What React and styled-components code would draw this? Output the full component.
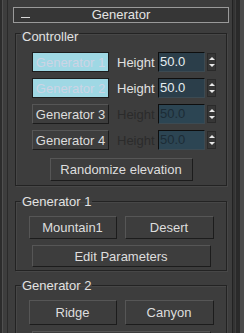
import React from 'react'
import styled, { createGlobalStyle } from 'styled-components'

const Global = createGlobalStyle`
  html, body { margin: 0; padding: 0; background: #3d3d3d; }
  * { box-sizing: border-box; }
`

const Screen = styled.div`
  width: 244px;
  height: 333px;
  overflow: hidden;
  display: flex;
  background: #3d3d3d;
  font-family: "Liberation Sans", Arial, sans-serif;
  font-size: 13px;
  color: #dedede;
  border-left: 2px solid #2c2c2c;
`

const Gutter = styled.div`
  width: 5px;
  border-left: 1px solid #505050;
`

const Panel = styled.div`
  width: 226px;
  flex: none;
  border-left: 1px solid #2a2a2a;
  border-right: 1px solid #222;
  display: flex;
  flex-direction: column;
  padding-top: 7px;
`

const ScrollTrack = styled.div`
  flex: 1;
  border-left: 2px solid #333;
  display: flex;
  justify-content: flex-end;
  & > div {
    width: 8px;
    background: #4a4a4a;
    border-left: 4px solid #2a2a2a;
  }
`

const RolloutHeader = styled.div`
  margin: 0 3px 0 5px;
  height: 16px;
  border: 1px solid #9a9a9a;
  background: #363636;
  display: flex;
  align-items: center;
  justify-content: center;
  position: relative;
  line-height: 14px;
  color: #e4e4e4;
`

const Dash = styled.span`
  position: absolute;
  left: 7px;
  top: 9px;
  width: 9px;
  height: 1px;
  background: #d8d8d8;
`

const Group = styled.fieldset`
  margin: ${p => p.$top || 0}px 5px 0 7px;
  padding: ${p => p.$pt || 7}px 5px ${p => p.$pb || 3}px;
  border: 1px solid #232323;
  box-shadow: inset 1px 1px 0 #474747, 1px 1px 0 #474747;
  min-width: 0;
`

const Legend = styled.legend`
  padding: ${p => p.$shift || 0}px 1px 0;
  line-height: 15px;
  color: #e2e2e2;
`

const Rows = styled.div`
  padding-left: 11px;
  display: flex;
  flex-direction: column;
  gap: 6px;
`

const Row = styled.div`
  display: flex;
  align-items: center;
  height: 20px;
`

const Btn = styled.button`
  font-family: "Liberation Sans", Arial, sans-serif;
  font-size: 13px;
  padding: 0;
  width: ${p => p.$w ? p.$w + 'px' : 'auto'};
  height: ${p => p.$h || 23}px;
  color: ${p => p.$active ? '#cdd4e4' : '#dedede'};
  background: ${p => p.$active ? '#9fd8e4' : '#3d3d3d'};
  border: 1px solid;
  border-color: ${p => p.$active ? '#1c1c1c' : '#565656 #1c1c1c #1c1c1c #565656'};
  white-space: nowrap;
`

const HeightLabel = styled.span`
  margin-left: 8px;
  width: 41px;
  color: ${p => p.$disabled ? '#2b2b2b' : '#e0e0e0'};
`

const Field = styled.div`
  width: 47px;
  height: 20px;
  background: ${p => p.$disabled ? '#2c4553' : '#2b3e4a'};
  border: 1px solid;
  border-color: #0e0e0e #3c4a52 #3c4a52 #0e0e0e;
  padding-left: 1px;
  line-height: 17px;
  color: ${p => p.$disabled ? '#1c2c36' : '#e6eef0'};
`

const Arrows = styled.div`
  margin-left: 2px;
  width: 9px;
  height: 18px;
  background: #363636;
  border: 1px solid #2a2a2a;
  display: flex;
  flex-direction: column;
  align-items: center;
  justify-content: space-evenly;
`

const Tri = styled.span`
  width: 0;
  height: 0;
  border-left: 3px solid transparent;
  border-right: 3px solid transparent;
  ${p => p.$down ? 'border-top: 3px solid #e8e8e8;' : 'border-bottom: 3px solid #e8e8e8;'}
`

const Center = styled.div`
  display: flex;
  justify-content: center;
  margin-top: ${p => p.$top || 0}px;
`

const Pair = styled.div`
  display: grid;
  grid-template-columns: 88px 89px;
  column-gap: 8px;
  justify-content: center;
`

const controllers = [
  { name: 'Generator 1', active: true },
  { name: 'Generator 2', active: true },
  { name: 'Generator 3', disabled: true },
  { name: 'Generator 4', disabled: true },
]

function GenRow({ name, active, disabled }) {
  return (
    <Row>
      <Btn $w={77} $h={20} $active={active}>{name}</Btn>
      <HeightLabel $disabled={disabled}>Height</HeightLabel>
      <Field $disabled={disabled}>50.0</Field>
      <Arrows><Tri /><Tri $down /></Arrows>
    </Row>
  )
}

function GeneratorGroup({ title, left, right, top, pairH = 23 }) {
  return (
    <Group $top={top}>
      <Legend>{title}</Legend>
      <Pair>
        <Btn $h={pairH}>{left}</Btn>
        <Btn $h={pairH}>{right}</Btn>
      </Pair>
      <Center $top={6}>
        <Btn $w={179} $h={22}>Edit Parameters</Btn>
      </Center>
    </Group>
  )
}

export default function App() {
  return (
    <Screen>
      <Global />
      <Gutter />
      <Panel>
        <RolloutHeader><Dash />Generator</RolloutHeader>

        <Group $top={0} $pt={8} $pb={4}>
          <Legend $shift={6}>Controller</Legend>
          <Rows>
            {controllers.map(c => <GenRow key={c.name} {...c} />)}
          </Rows>
          <Center $top={8}>
            <Btn $w={143}>Randomize elevation</Btn>
          </Center>
        </Group>

        <GeneratorGroup top={8} title="Generator 1" left="Mountain1" right="Desert" />
        <GeneratorGroup top={7} pairH={25} title="Generator 2" left="Ridge" right="Canyon" />
      </Panel>
      <ScrollTrack><div /></ScrollTrack>
    </Screen>
  )
}
